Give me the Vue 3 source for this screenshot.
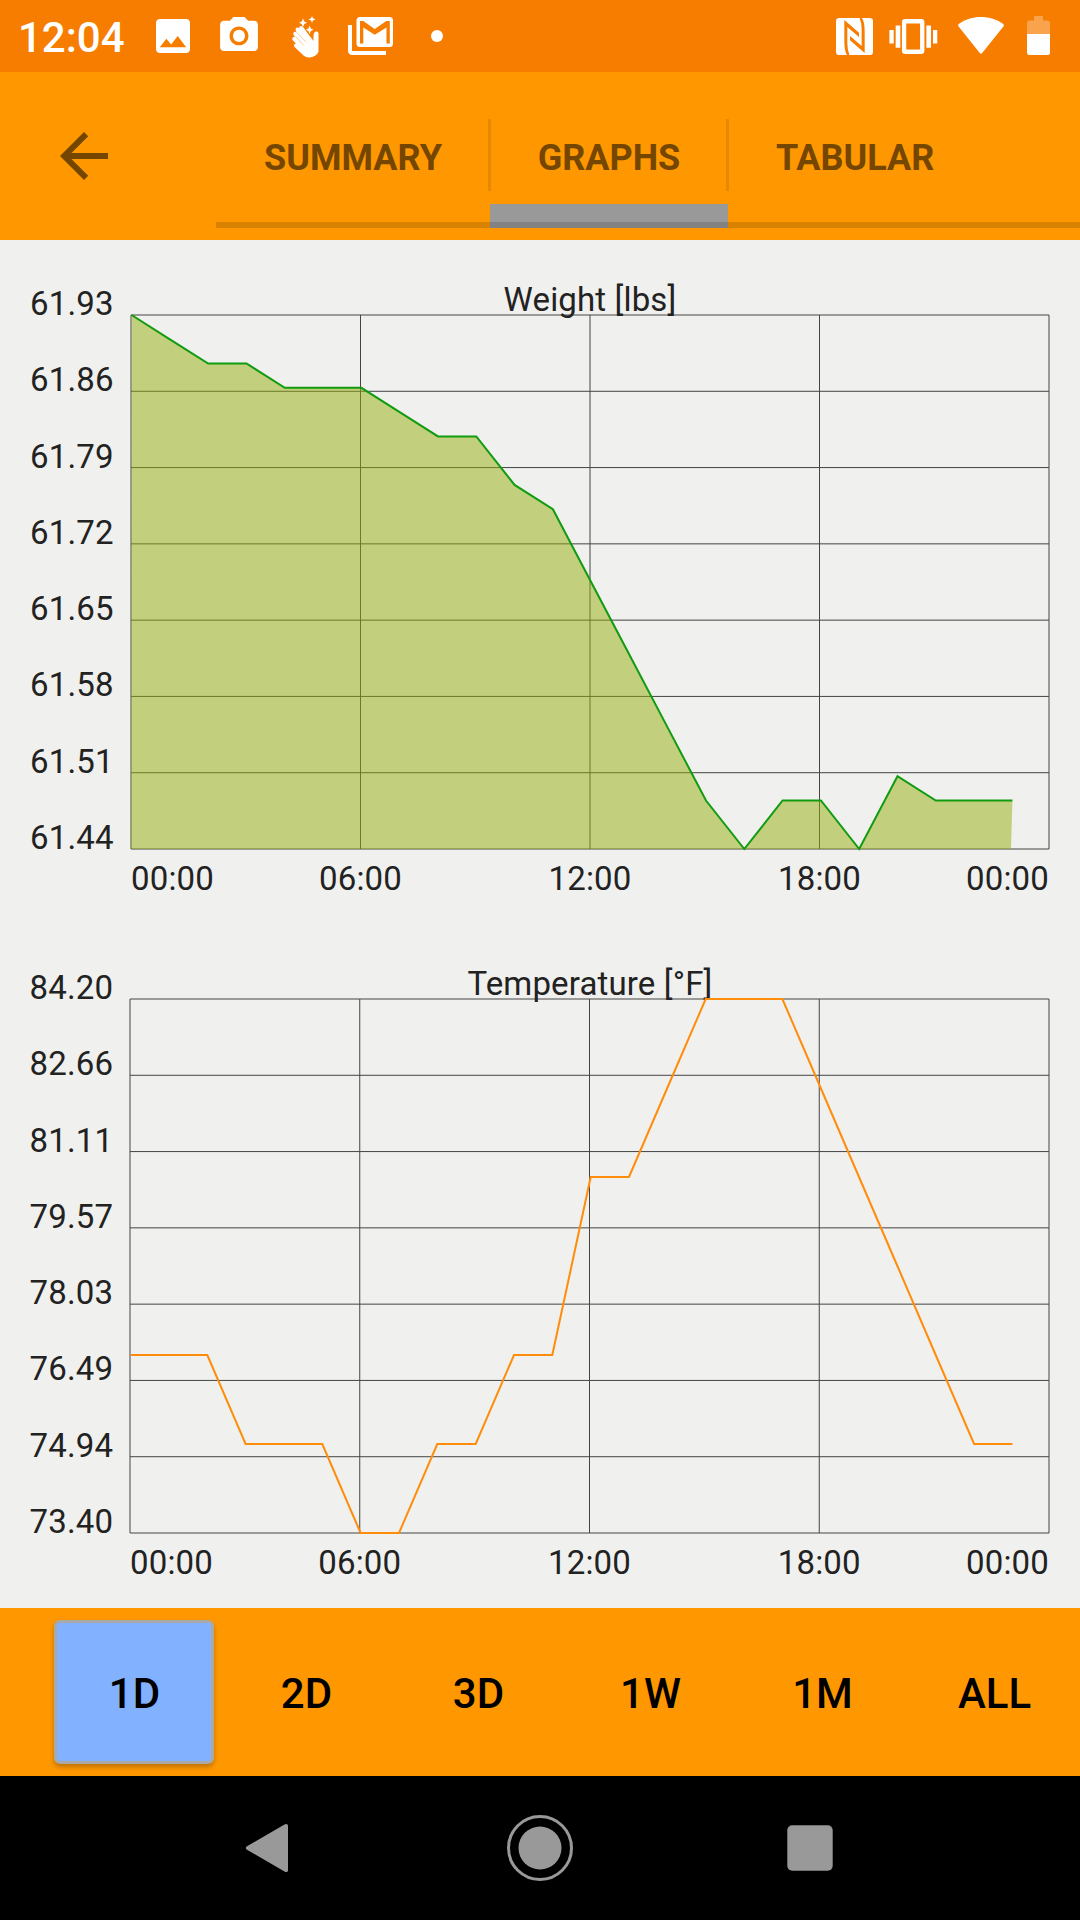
<template>
  <div class="screen">
    <header class="status-bar">
      <span class="clock">12:04</span>
      <svg class="icon-image" viewBox="3 3 18 18">
        <path d="M21 19V5c0-1.100-.9-2-2-2H5c-1.100 0-2 .9-2 2v14c0 1.100.9 2 2 2h14c1.100 0 2-.9 2-2zM8.500 13.500l2.500 3.010L14.500 12l4.500 6H5l3.500-4.500z" />
      </svg>
      <svg class="icon-camera" viewBox="2 2 20 18">
        <circle cx="12" cy="12" r="3.200" />
        <path d="M9 2L7.170 4H4c-1.100 0-2 .9-2 2v12c0 1.100.9 2 2 2h16c1.100 0 2-.9 2-2V6c0-1.100-.9-2-2-2h-3.170L15 2H9zm3 15c-2.760 0-5-2.240-5-5s2.240-5 5-5 5 2.240 5 5-2.240 5-5 5z" />
      </svg>
      <svg class="icon-hand" viewBox="0 0 29 42">
        <path d="M12 2.500l1.300 2.900L16 6.700l-2.700 1.300L12 11l-1.300-3L8 6.700l2.700-1.300z" />
        <path d="M21 0l1 2.300L24.500 3.300 22 4.400 21 6.700 20 4.400 17.500 3.300 20 2.300z" />
        <path d="M18.600 9.500l1.200 2.900 2.700 1.300-2.700 1.300-1.200 2.900-1.200-2.900-2.700-1.300 2.700-1.300z" />
        <path d="M22.500 25V20c0-3 1-4.500 3-4.500 1.500 0 2 1 2 2.500V35c0 3-5 6.500-9.500 6.500-3 0-5-1.500-7-3.500L3.500 31c-1.500-2 .5-4 2-2.800L2 24.500c-2-2.200.3-4.600 2-3.200L3 19.500c-2-2.500.5-5 2.500-3L5 15c-1.500-2.500 1.500-4.500 3.200-2.700 0-2.300 2.300-3 3.800-1.300z" />
        <path class="crease" d="M4.500 20.500l8.500 9M5.800 16.300l9.500 10" />
      </svg>
      <svg class="icon-mail" viewBox="0 0 45 38">
        <path d="M0 8h4v26h34v4H4c-2.200 0-4-1.800-4-4z" />
        <rect x="8.500" y="0" width="36.500" height="30" rx="3.500" />
        <path class="cut" d="M12 26.500V4h3.300L26.700 12 38.300 4h3.500v22.500h-3.300V10.500L26.700 17.700 15.300 10.500v16z" />
      </svg>
      <span class="dot"></span>
      <svg class="icon-nfc" viewBox="0 0 111 111">
        <rect width="111" height="111" rx="10" />
        <path class="cut" d="M25 6L69 44V57L34 27V75Q34 95 40 111H33Q25 100 25 70z" />
        <path class="cut" d="M86 105L42 67V54L77 84V36Q77 16 71 0H78Q86 11 86 41z" />
      </svg>
      <svg class="icon-vibrate" viewBox="0 0 146 106">
        <path fill-rule="evenodd" d="M48 0h48q10 0 10 10v86q0 10-10 10H48q-10 0-10-10V10Q38 0 48 0zM51 14v78h42V14z" />
        <path d="M19 20h14v67H19zM0 33h13v41H0zM112 20h14v67h-14zM132 33h13v41h-13z" />
      </svg>
      <svg class="icon-wifi" viewBox="0 0 46 37">
        <path d="M24.200 36c-.7.900-1.700.9-2.400 0L.6 9.500C-.2 8.500 0 7.500 1 6.800 7.500 2.200 14.500 0 23 0s15.500 2.200 22 6.800c1 .7 1.200 1.700.4 2.700z" />
      </svg>
      <svg class="icon-battery" viewBox="0 0 23 39">
        <path opacity="0.3" d="M7 0h9v4.500h4.500Q23 4.500 23 7v11H0V7q0-2.500 2.500-2.500H7z" />
        <path d="M0 18h23v18.500q0 2.500-2.500 2.500h-18Q0 39 0 36.500z" />
      </svg>
    </header>

    <div class="app-bar">
      <button class="back">
        <svg viewBox="0 0 24 24"><path d="M20 11H7.830l5.590-5.590L12 4l-8 8 8 8 1.410-1.410L7.830 13H20v-2z" /></svg>
      </button>
      <nav class="tabs">
        <button
          v-for="tab in tabs"
          :key="tab"
          class="tab"
          :class="{ active: tab === activeTab }"
          @click="activeTab = tab"
        >{{ tab }}</button>
      </nav>
    </div>

    <main class="charts">
      <svg v-for="chart in charts" :key="chart.title" class="chart" viewBox="0 0 1080 684">
        <g class="grid">
          <line v-for="y in gridRows" :key="'h' + y" :x1="chart.left" :x2="RIGHT" :y1="y" :y2="y" />
          <line v-for="x in gridCols(chart)" :key="'v' + x" :x1="x" :x2="x" :y1="TOP" :y2="BOTTOM" />
        </g>
        <text class="label" text-anchor="middle" x="590" y="71">{{ chart.title }}</text>
        <text
          v-for="(label, i) in chart.labels"
          :key="label"
          class="label"
          :x="chart.labelX"
          :y="gridRows[i]"
        >{{ label }}</text>
        <text
          v-for="(time, i) in times"
          :key="i"
          class="label"
          :text-anchor="i === 0 ? 'start' : i === 4 ? 'end' : 'middle'"
          :x="gridCols(chart)[i]"
          y="650"
        >{{ time }}</text>
        <polygon v-if="chart.fill" :points="areaPoints(chart)" :fill="chart.fill" />
        <polyline class="curve" :points="linePoints(chart)" :stroke="chart.stroke" />
      </svg>
    </main>

    <div class="range-bar">
      <button
        v-for="range in ranges"
        :key="range"
        class="range"
        :class="{ selected: range === activeRange }"
        @click="activeRange = range"
      >{{ range }}</button>
    </div>

    <footer class="nav-bar">
      <svg viewBox="0 0 72 72"><path d="M13 34.300c-1.600 1-1.600 2.400 0 3.400L50.500 59.500c2 1.200 3.500.5 3.500-1.500V14c0-2-1.500-2.700-3.500-1.500z" /></svg>
      <svg viewBox="0 0 72 72">
        <circle class="ring" cx="36" cy="36" r="31.500" />
        <circle cx="36" cy="36" r="21.500" />
      </svg>
      <svg viewBox="0 0 72 72"><rect x="13.300" y="13.300" width="45.400" height="45.400" rx="5" /></svg>
    </footer>
  </div>
</template>

<script setup>
import { ref } from 'vue'

const tabs = ['SUMMARY', 'GRAPHS', 'TABULAR']
const activeTab = ref('GRAPHS')

const ranges = ['1D', '2D', '3D', '1W', '1M', 'ALL']
const activeRange = ref('1D')

const times = ['00:00', '06:00', '12:00', '18:00', '00:00']

// plot area inside each chart
const TOP = 75
const BOTTOM = 609
const RIGHT = 1049
const gridRows = Array.from({ length: 8 }, (_, i) => TOP + ((BOTTOM - TOP) / 7) * i)

// one value per hour
const charts = [
  {
    title: 'Weight [lbs]',
    left: 131,
    labelX: 30,
    stroke: '#109b10',
    fill: 'rgba(148, 174, 10, 0.5)',
    max: 22,
    min: 0,
    labels: ['61.93', '61.86', '61.79', '61.72', '61.65', '61.58', '61.51', '61.44'],
    values: [22, 21, 20, 20, 19, 19, 19, 18, 17, 17, 15, 14, 11, 8, 5, 2, 0, 2, 2, 0, 3, 2, 2, 2]
  },
  {
    title: 'Temperature [°F]',
    left: 130,
    labelX: 29.5,
    stroke: '#ff8c0a',
    fill: null,
    max: 84.2,
    min: 73.4,
    labels: ['84.20', '82.66', '81.11', '79.57', '78.03', '76.49', '74.94', '73.40'],
    values: [77, 77, 77, 75.2, 75.2, 75.2, 73.4, 73.4, 75.2, 75.2, 77, 77, 80.6, 80.6, 82.4, 84.2, 84.2, 84.2, 82.4, 80.6, 78.8, 77, 75.2, 75.2]
  }
]

const gridCols = (chart) => {
  const step = (RIGHT - chart.left) / 4
  return [0, 1, 2, 3, 4].map((i) => chart.left + step * i)
}

const linePoints = (chart) => {
  const first = chart.left + 0.6
  const step = (1012.4 - first) / (chart.values.length - 1)
  return chart.values
    .map((v, i) => {
      const y = BOTTOM - ((v - chart.min) / (chart.max - chart.min)) * (BOTTOM - TOP)
      return `${(first + step * i).toFixed(1)},${y.toFixed(1)}`
    })
    .join(' ')
}

const areaPoints = (chart) => `${chart.left},${BOTTOM} ${linePoints(chart)} 1011,${BOTTOM}`
</script>

<style>
body {
  margin: 0;
}
</style>

<style scoped>
.screen {
  width: 1080px;
  height: 1920px;
  display: flex;
  flex-direction: column;
  overflow: hidden;
  background: #f0f0ee;
  font-family: Roboto, "Liberation Sans", sans-serif;
}

button {
  padding: 0;
  border: 0;
  background: none;
  font: inherit;
}

/* status bar */
.status-bar {
  height: 72px;
  display: flex;
  align-items: flex-start;
  background: #f77d00;
  color: #fff;
}

.status-bar svg {
  fill: #fff;
  flex: none;
}

.clock {
  width: 138px;
  padding-left: 18px;
  font-size: 42px;
  font-weight: 500;
  line-height: 75px;
}

.icon-image {
  width: 34px;
  height: 34px;
  margin-top: 19px;
}

.icon-camera {
  width: 38px;
  height: 34px;
  margin: 17px 0 0 30px;
}

.icon-hand {
  width: 29px;
  height: 42px;
  margin: 16px 0 0 33px;
}

.crease {
  fill: none;
  stroke: #f77d00;
  stroke-width: 0.4;
}

.icon-mail {
  width: 45px;
  height: 38px;
  margin: 17px 0 0 28px;
}

.status-bar .cut {
  fill: #f77d00;
}

.dot {
  width: 12px;
  height: 12px;
  margin: 30px 0 0 38px;
  border-radius: 50%;
  background: #fff;
}

.icon-nfc {
  width: 37px;
  height: 37px;
  margin: 18px 0 0 auto;
}

.icon-vibrate {
  width: 49px;
  height: 35px;
  margin: 19px 0 0 16px;
}

.icon-wifi {
  width: 46px;
  height: 37px;
  margin: 17px 0 0 20px;
}

.icon-battery {
  width: 23px;
  height: 39px;
  margin: 16px 30px 0 23px;
}

/* app bar */
.app-bar {
  height: 168px;
  display: flex;
  background: #ff9800;
}

.back {
  width: 72px;
  height: 72px;
  margin: 48px 96px 0 48px;
}

.back svg {
  display: block;
  fill: #754600;
}

.tabs {
  flex: 1;
  height: 156px;
  display: flex;
  background: linear-gradient(rgba(0, 0, 0, 0.15), rgba(0, 0, 0, 0.15)) bottom / 100% 6px no-repeat;
}

.tab {
  position: relative;
  height: 156px;
  padding: 16px 47.7px 0 48px;
  box-sizing: border-box;
  color: #754600;
  font-size: 36px;
  font-weight: 700;
}

.tab:not(:last-child)::after {
  content: "";
  position: absolute;
  top: 47px;
  right: -1px;
  width: 3px;
  height: 72px;
  background: #e58900;
}

.tab.active {
  background:
    linear-gradient(#828282, #828282) bottom / 100% 6px no-repeat,
    linear-gradient(#999, #999) bottom / 100% 24px no-repeat;
}

/* charts */
.charts {
  height: 1368px;
  display: flex;
  flex-direction: column;
}

.chart {
  display: block;
  width: 1080px;
  height: 684px;
}

.grid line {
  stroke: #444;
  stroke-width: 1;
}

.label {
  fill: #222;
  font-size: 33px;
  letter-spacing: 0.15px;
}

.curve {
  fill: none;
  stroke-width: 2;
}

/* range buttons */
.range-bar {
  height: 168px;
  display: flex;
  align-items: center;
  padding-left: 48px;
  background: #ff9800;
}

.range {
  width: 160px;
  height: 144px;
  margin: 0 6px;
  padding: 2px 0 0 1px;
  box-sizing: border-box;
  border: 3px solid transparent;
  border-radius: 6px;
  color: #000;
  font-size: 42px;
  font-weight: 500;
}

.range.selected {
  border-color: #a9a9a9;
  background: #82b1ff;
  box-shadow: 0 3px 5px rgba(0, 0, 0, 0.25);
}

/* system navigation */
.nav-bar {
  flex: 1;
  display: flex;
  justify-content: center;
  align-items: center;
  gap: 198px;
  background: #000;
}

.nav-bar svg {
  width: 72px;
  height: 72px;
  fill: #999;
}

.nav-bar .ring {
  fill: none;
  stroke: #999;
  stroke-width: 3;
}
</style>
